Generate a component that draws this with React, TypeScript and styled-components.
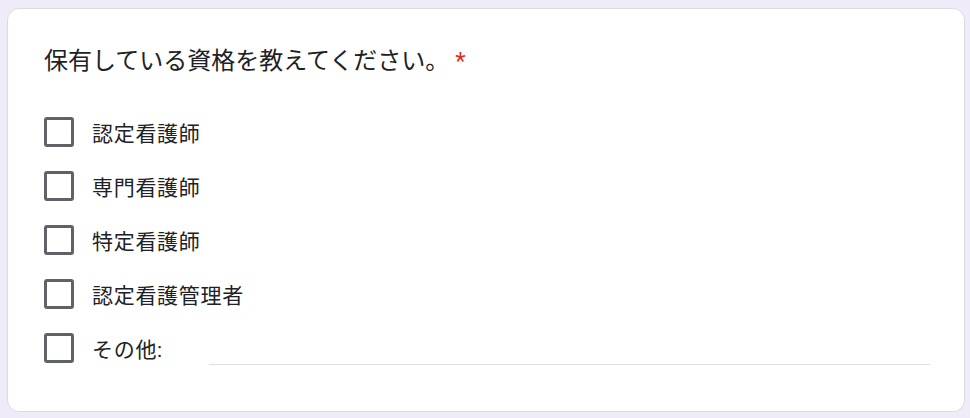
import React from "react";
import styled, { createGlobalStyle } from "styled-components";

const Global = createGlobalStyle`
  html, body { margin: 0; padding: 0; background: #f0ebf8; }
  body { font-family: Roboto, "Noto Sans CJK JP", sans-serif; }
`;

const Page = styled.div`
  padding: 8px 5px 6px 7px;
`;

const Card = styled.div`
  box-sizing: border-box;
  width: 958px;
  height: 404px;
  background: #fff;
  border: 1px solid #dadce0;
  border-radius: 12px;
  padding: 34px 34px 0 36px;
  display: flex;
  flex-direction: column;
`;

const Title = styled.div`
  font-family: Roboto, "Noto Sans CJK JP", sans-serif;
  font-size: 24px;
  line-height: 36px;
  color: #202124;
  letter-spacing: 0;
`;

const Required = styled.span`
  color: #d93025;
  padding-left: 6px;
`;

const Options = styled.div`
  margin-top: 26px;
  display: flex;
  flex-direction: column;
`;

const Row = styled.label`
  height: 54px;
  display: flex;
  align-items: center;
`;

const Box = styled.span`
  box-sizing: border-box;
  width: 30px;
  height: 30px;
  border: 3px solid #5f6368;
  border-radius: 3px;
  flex: none;
`;

const Label = styled.span`
  margin-left: 18px;
  font-family: Roboto, "Noto Sans CJK JP", sans-serif;
  font-size: 21px;
  letter-spacing: 0.7px;
  color: #202124;
  white-space: nowrap;
`;

const OtherInput = styled.div`
  flex: 1;
  align-self: flex-end;
  margin-left: 46px;
  margin-bottom: 10px;
  border-bottom: 1px solid #e0e0e0;
  height: 1px;
`;

const options = ["認定看護師", "専門看護師", "特定看護師", "認定看護管理者"];

export default function App() {
  return (
    <Page>
      <Global />
      <Card>
        <Title>
          保有している資格を教えてください。<Required>*</Required>
        </Title>
        <Options>
          {options.map((o) => (
            <Row key={o}>
              <Box />
              <Label>{o}</Label>
            </Row>
          ))}
          <Row>
            <Box />
            <Label>その他:</Label>
            <OtherInput />
          </Row>
        </Options>
      </Card>
    </Page>
  );
}
